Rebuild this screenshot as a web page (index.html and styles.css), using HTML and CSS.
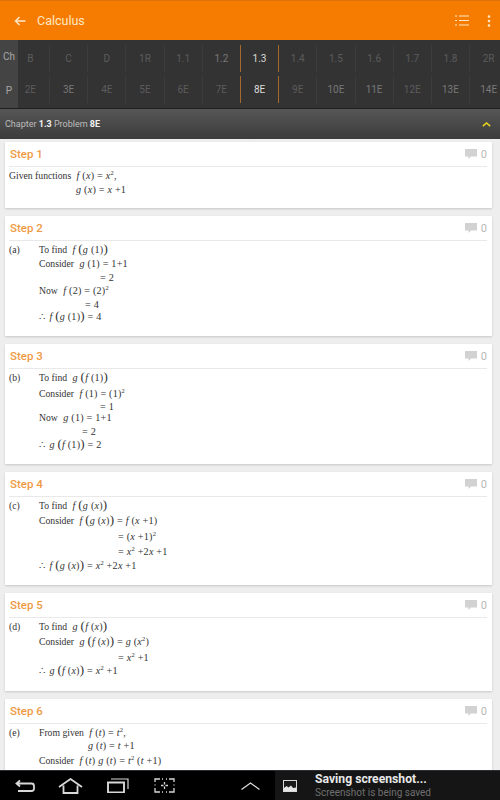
FILE: index.html
```html
<!DOCTYPE html>
<html lang="en">
<head>
<meta charset="utf-8">
<title>Calculus</title>
<link rel="stylesheet" href="styles.css">
</head>
<body>
<div class="app">
  <header class="appbar">
    <svg class="back" viewBox="0 0 12 10"><path d="M11.500 5H1.500M5.500 1L1.500 5l4 4" fill="none" stroke="currentColor" stroke-width="1.500"/></svg>
    <span class="apptitle">Calculus</span>
    <svg class="listicon" viewBox="0 0 14 11"><path d="M0 1h2M0 5.500h2M0 10h2M4 1h10M4 5.500h10M4 10h10" stroke="currentColor" stroke-width="1.200"/></svg>
    <svg class="dots" viewBox="0 0 4 12"><circle cx="2" cy="1.500" r="1.300"/><circle cx="2" cy="6" r="1.300"/><circle cx="2" cy="10.500" r="1.300"/></svg>
  </header>

  <section class="picker">
    <div class="rail"><span>Ch</span><span>P</span></div>
    <div class="rows">
      <div class="row">
        <span class="cell">B</span><span class="cell">C</span><span class="cell">D</span><span class="cell">1R</span><span class="cell">1.1</span><span class="cell lit">1.2</span><span class="cell on">1.3</span><span class="cell">1.4</span><span class="cell">1.5</span><span class="cell">1.6</span><span class="cell">1.7</span><span class="cell">1.8</span><span class="cell">2R</span>
      </div>
      <div class="row">
        <span class="cell">2E</span><span class="cell lit">3E</span><span class="cell">4E</span><span class="cell">5E</span><span class="cell">6E</span><span class="cell">7E</span><span class="cell on">8E</span><span class="cell">9E</span><span class="cell lit">10E</span><span class="cell lit">11E</span><span class="cell">12E</span><span class="cell lit">13E</span><span class="cell lit">14E</span>
      </div>
    </div>
  </section>

  <div class="crumb">
    <span>Chapter <b>1.3</b> Problem <b>8E</b></span>
    <svg class="chev" viewBox="0 0 9 5"><path d="M.8 4.200L4.500 1l3.700 3.200" fill="none" stroke="currentColor" stroke-width="1.600"/></svg>
  </div>

  <main class="steps">
    <article class="card short">
      <div class="cardhead"><h2>Step 1</h2><span class="count"><svg class="bubble" viewBox="0 0 12 10"><path d="M0 0h12v7.500H6L3.500 10V7.500H0z"/></svg>0</span></div>
      <div class="body">
        <div class="line">Given functions <span class="m"><i>f</i> (<i>x</i>) = <i>x</i><sup>2</sup>,</span></div>
        <div class="line i67"><span class="m m0"><i>g</i> (<i>x</i>) = <i>x</i> +1</span></div>
      </div>
    </article>

    <article class="card">
      <div class="cardhead"><h2>Step 2</h2><span class="count"><svg class="bubble" viewBox="0 0 12 10"><path d="M0 0h12v7.500H6L3.500 10V7.500H0z"/></svg>0</span></div>
      <div class="body">
        <div class="line"><span class="tag">(a)</span>To find <span class="m"><i>f</i> <span class="big">(</span><i>g</i> (1)<span class="big">)</span></span></div>
        <div class="line"><span class="tag"></span>Consider <span class="m"><i>g</i> (1) = 1+1</span></div>
        <div class="line i91"><span class="m m0">= 2</span></div>
        <div class="line up1"><span class="tag"></span>Now <span class="m"><i>f</i> (2) = (2)<sup>2</sup></span></div>
        <div class="line i76"><span class="m m0">= 4</span></div>
        <div class="line up2"><span class="tag"></span>∴ <span class="m m1"><i>f</i> <span class="big">(</span><i>g</i> (1)<span class="big">)</span> = 4</span></div>
      </div>
    </article>

    <article class="card">
      <div class="cardhead"><h2>Step 3</h2><span class="count"><svg class="bubble" viewBox="0 0 12 10"><path d="M0 0h12v7.500H6L3.500 10V7.500H0z"/></svg>0</span></div>
      <div class="body">
        <div class="line"><span class="tag">(b)</span>To find <span class="m"><i>g</i> <span class="big">(</span><i>f</i> (1)<span class="big">)</span></span></div>
        <div class="line dn2"><span class="tag"></span>Consider <span class="m"><i>f</i> (1) = (1)<sup>2</sup></span></div>
        <div class="line i91 up1"><span class="m m0">= 1</span></div>
        <div class="line up3"><span class="tag"></span>Now <span class="m"><i>g</i> (1) = 1+1</span></div>
        <div class="line i73"><span class="m m0">= 2</span></div>
        <div class="line up1"><span class="tag"></span>∴ <span class="m m1"><i>g</i> <span class="big">(</span><i>f</i> (1)<span class="big">)</span> = 2</span></div>
      </div>
    </article>

    <article class="card">
      <div class="cardhead"><h2>Step 4</h2><span class="count"><svg class="bubble" viewBox="0 0 12 10"><path d="M0 0h12v7.500H6L3.500 10V7.500H0z"/></svg>0</span></div>
      <div class="body">
        <div class="line"><span class="tag">(c)</span>To find <span class="m"><i>f</i> <span class="big">(</span><i>g</i> (<i>x</i>)<span class="big">)</span></span></div>
        <div class="line dn1"><span class="tag"></span>Consider <span class="m"><i>f</i> <span class="big">(</span><i>g</i> (<i>x</i>)<span class="big">)</span> = <i>f</i> (<i>x</i> +1)</span></div>
        <div class="line i109 dn2"><span class="m m0">= (<i>x</i> +1)<sup>2</sup></span></div>
        <div class="line i109 dn1"><span class="m m0">= <i>x</i><sup>2</sup> +2<i>x</i> +1</span></div>
        <div class="line"><span class="tag"></span>∴ <span class="m m1"><i>f</i> <span class="big">(</span><i>g</i> (<i>x</i>)<span class="big">)</span> = <i>x</i><sup>2</sup> +2<i>x</i> +1</span></div>
      </div>
    </article>

    <article class="card tall">
      <div class="cardhead"><h2>Step 5</h2><span class="count"><svg class="bubble" viewBox="0 0 12 10"><path d="M0 0h12v7.500H6L3.500 10V7.500H0z"/></svg>0</span></div>
      <div class="body">
        <div class="line"><span class="tag">(d)</span>To find <span class="m"><i>g</i> <span class="big">(</span><i>f</i> (<i>x</i>)<span class="big">)</span></span></div>
        <div class="line dn1"><span class="tag"></span>Consider <span class="m"><i>g</i> <span class="big">(</span><i>f</i> (<i>x</i>)<span class="big">)</span> = <i>g</i> (<i>x</i><sup>2</sup>)</span></div>
        <div class="line i109 dn2"><span class="m m0">= <i>x</i><sup>2</sup> +1</span></div>
        <div class="line up1"><span class="tag"></span>∴ <span class="m m1"><i>g</i> <span class="big">(</span><i>f</i> (<i>x</i>)<span class="big">)</span> = <i>x</i><sup>2</sup> +1</span></div>
      </div>
    </article>

    <article class="card">
      <div class="cardhead"><h2>Step 6</h2><span class="count"><svg class="bubble" viewBox="0 0 12 10"><path d="M0 0h12v7.500H6L3.500 10V7.500H0z"/></svg>0</span></div>
      <div class="body">
        <div class="line"><span class="tag">(e)</span>From given <span class="m"><i>f</i> (<i>t</i>) = <i>t</i><sup>2</sup>,</span></div>
        <div class="line i79 up1"><span class="m m0"><i>g</i> (<i>t</i>) = <i>t</i> +1</span></div>
        <div class="line dn1"><span class="tag"></span>Consider <span class="m"><i>f</i> (<i>t</i>) <i>g</i> (<i>t</i>) = <i>t</i><sup>2</sup> (<i>t</i> +1)</span></div>
      </div>
    </article>
  </main>

  <footer class="sysbar">
    <nav class="navkeys">
      <svg class="k-back" viewBox="0 0 20 14"><path d="M5 1.500L1.500 4.500 5 7.500M2 4.500h14.500a2.500 2.500 0 0 1 2.500 2.500v2.500a2.500 2.500 0 0 1-2.500 2.500H3" fill="none" stroke="currentColor" stroke-width="1.800"/></svg>
      <svg class="k-home" viewBox="0 0 25 16"><path d="M1 9L12.500 1 24 9M5.500 7.500V15h14V7.500" fill="none" stroke="currentColor" stroke-width="1.800"/></svg>
      <svg class="k-recent" viewBox="0 0 22 15"><path d="M1 4.500h16v10H1z" fill="none" stroke="currentColor" stroke-width="1.900"/><path d="M4 1h17v10" fill="none" stroke="currentColor" stroke-width="1.200"/></svg>
      <svg class="k-shot" viewBox="0 0 21 15"><path d="M1 4V1h5M15 1h5v3M1 10v4h5M15 14h5v-4M8 1h1M12 1h1M8 14h1M12 14h1M1 6.500v1M20 6.500v1M10.500 4v2.500M10.500 8.500V11M7 7.500h2.500M11.500 7.500H14" fill="none" stroke="currentColor" stroke-width="1.300"/></svg>
      <svg class="k-up" viewBox="0 0 19 8"><path d="M.5 7.500L9.500 1l9 6.500" fill="none" stroke="currentColor" stroke-width="1.300"/></svg>
    </nav>
    <div class="notice">
      <svg class="picture" viewBox="0 0 14 12"><path d="M0 0h14v12H0z" fill="#d9d9d9"/><path d="M1 1h12v10H1z" fill="#1a1a1a"/><path d="M1 11V8l2.500-2 2 1.500L8 5.500 10 8l3-.5V11z" fill="#e6e6e6"/></svg>
      <div class="noticetext">
        <strong>Saving screenshot...</strong>
        <span>Screenshot is being saved</span>
      </div>
    </div>
  </footer>
</div>
</body>
</html>
```

FILE: styles.css
```css
* { box-sizing: border-box; }
html, body { margin: 0; padding: 0; }
body { font-family: Roboto, "Liberation Sans", sans-serif; background: #eee; }
.app { width: 500px; height: 800px; display: flex; flex-direction: column; overflow: hidden; }

.appbar { flex: 0 0 40px; display: flex; align-items: center; background: #f57c00; border-top: 1px solid #dd7208; color: #ffe7c6; padding: 0 9px 0 14px; }
.back { width: 12px; height: 10px; }
.apptitle { margin-left: 11px; font-size: 12.500px; font-weight: 400; }
.listicon { width: 14px; height: 11px; margin-left: auto; }
.dots { width: 4px; height: 12px; margin-left: 18px; fill: currentColor; }

.picker { flex: 0 0 69px; display: flex; background: #333; border-bottom: 1px solid #1f1f1f; overflow: hidden; }
.rail { flex: 0 0 18px; background: #444; color: #a8a8a8; font-size: 10px; display: flex; flex-direction: column; align-items: center; padding-top: 10px; gap: 21px; line-height: 13px; position: relative; z-index: 1; }
.rows { flex: 0 0 auto; margin-left: -6.200px; padding-top: 5px; display: flex; flex-direction: column; gap: 4px; }
.row { display: flex; height: 27px; }
.cell { flex: 0 0 38.200px; display: flex; align-items: center; justify-content: center; font-size: 10px; color: #5c5c5c; border-right: 1px solid #3c3c3c; }
.cell.lit { color: #787878; }
.cell.on { color: #dcdcdc; font-weight: 400; }
.row .cell:nth-child(6), .cell.on { border-right-color: #a5692c; }

.crumb { flex: 0 0 30px; display: flex; align-items: center; justify-content: space-between; padding: 0 9px 0 5px; background: linear-gradient(#565656, #3c3c3c); color: #bdbdbd; font-size: 9px; }
.crumb b { color: #f2f2f2; font-weight: 700; }
.chev { width: 9px; height: 5px; color: #e5d11f; }

.steps { flex: 1 1 0; min-height: 0; overflow: hidden; padding: 3px 8px 0 5px; display: flex; flex-direction: column; gap: 8px; }
.card { flex: none; background: #fff; box-shadow: 0 1px 2px rgba(0,0,0,.16); padding: 0 5px 12px 4px; }
.card.short { padding-bottom: 11px; }
.card.tall { padding-bottom: 13px; }
.cardhead { height: 25px; display: flex; align-items: center; justify-content: space-between; border-bottom: 1px solid #e9e9e9; }
.cardhead h2 { margin: 0 0 0 1px; font-size: 11.500px; font-weight: 500; color: #ee9a45; }
.count { display: flex; align-items: center; gap: 4px; font-size: 11px; color: #b8b8b8; }
.bubble { width: 12px; height: 10px; fill: #d2d2d2; }

.body { padding-top: 2px; font-family: "Liberation Serif", serif; font-size: 9.700px; color: #333; }
.line { height: 14px; line-height: 14px; white-space: nowrap; }
.tag { display: inline-block; width: 30px; }
.m { font-size: 10.200px; letter-spacing: .2px; margin-left: 3px; }
.m.m0 { margin-left: 0; }
.m.m1 { margin-left: 2px; }
.m i { font-style: italic; }
.big { font-size: 13px; line-height: 10px; }
sup { font-size: 6.500px; line-height: 0; }

.i67 { padding-left: 67px; }
.i73 { padding-left: 73px; }
.i76 { padding-left: 76px; }
.i79 { padding-left: 79px; }
.i91 { padding-left: 91px; }
.i109 { padding-left: 109px; }
.up1 { margin-top: -1px; }
.up2 { margin-top: -2px; }
.up3 { margin-top: -3px; }
.dn1 { margin-top: 1px; }
.dn2 { margin-top: 2px; }

.sysbar { flex: 0 0 30px; display: flex; background: #000; color: #d8d8d8; border-top: 1px solid #2b2f33; }
.navkeys { flex: 0 0 275px; display: flex; align-items: center; padding-left: 15px; }
.k-back { width: 20px; height: 14px; }
.k-home { width: 25px; height: 16px; margin-left: 23px; }
.k-recent { width: 22px; height: 15px; margin-left: 24px; }
.k-shot { width: 21px; height: 15px; margin-left: 25px; }
.k-up { width: 19px; height: 8px; margin-left: 66px; }
.notice { flex: 1; display: flex; align-items: center; background: #151515; padding-left: 8px; }
.picture { width: 14px; height: 12px; flex: none; }
.noticetext { margin-left: 18px; display: flex; flex-direction: column; line-height: 13px; }
.noticetext strong { font-size: 12.200px; font-weight: 700; color: #e8e8e8; }
.noticetext span { font-size: 10px; color: #6f6f6f; }
```
